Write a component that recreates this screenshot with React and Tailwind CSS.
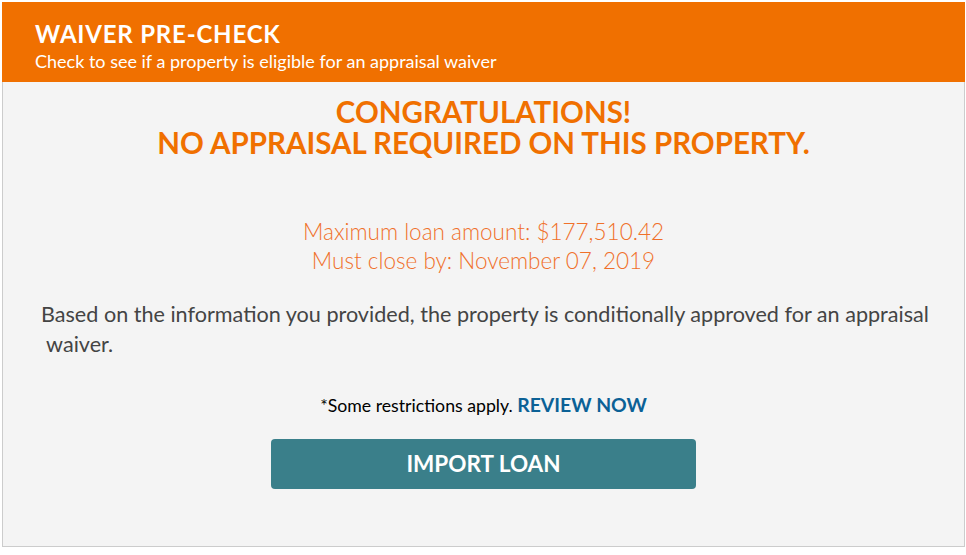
export default function App() {
  return (
    <div className="pl-[2px] pt-[2px] bg-white min-h-[555px]" style={{ fontFamily: 'Lato, "Open Sans", sans-serif' }}>
      <div className="w-[963px]">
        <div className="h-[80px] bg-[#f07000] pl-[33px] pt-[17px]">
          <div className="text-white font-bold text-[24px] leading-[30px] tracking-[0.8px]">WAIVER PRE-CHECK</div>
          <div className="text-white text-[18px] leading-[22px] mt-[1px]">Check to see if a property is eligible for an appraisal waiver</div>
        </div>
        <div className="h-[465px] bg-[#f4f4f4] border border-t-0 border-[#cccccc] flex flex-col items-center">
          <div className="mt-[14px] text-[#f07000] font-bold text-[29.5px] leading-[31px] text-center">
            <div>CONGRATULATIONS!</div>
            <div>NO APPRAISAL REQUIRED ON THIS PROPERTY.</div>
          </div>
          <div className="mt-[59px] text-[#f0702a] font-light text-[22.5px] leading-[29px] text-center">
            <div>Maximum loan amount: $177,510.42</div>
            <div>Must close by: November 07, 2019</div>
          </div>
          <div className="self-stretch mt-[24px] pl-[38px] pr-[20px] text-[#444444] text-[21.6px] leading-[30px]">
            Based on the information you provided, the property is conditionally approved for an appraisal
            <br />
            {"\u00a0"}waiver.
          </div>
          <div className="mt-[34px] text-[17.7px] leading-[24px] text-black">
            *Some restrictions apply. <span className="font-bold text-[#0b6196] text-[19.4px]">REVIEW NOW</span>
          </div>
          <button className="mt-[21px] w-[425px] h-[50px] rounded-[4px] bg-[#3a7f8a] text-white font-bold text-[22.5px]">
            IMPORT LOAN
          </button>
        </div>
      </div>
    </div>
  );
}
